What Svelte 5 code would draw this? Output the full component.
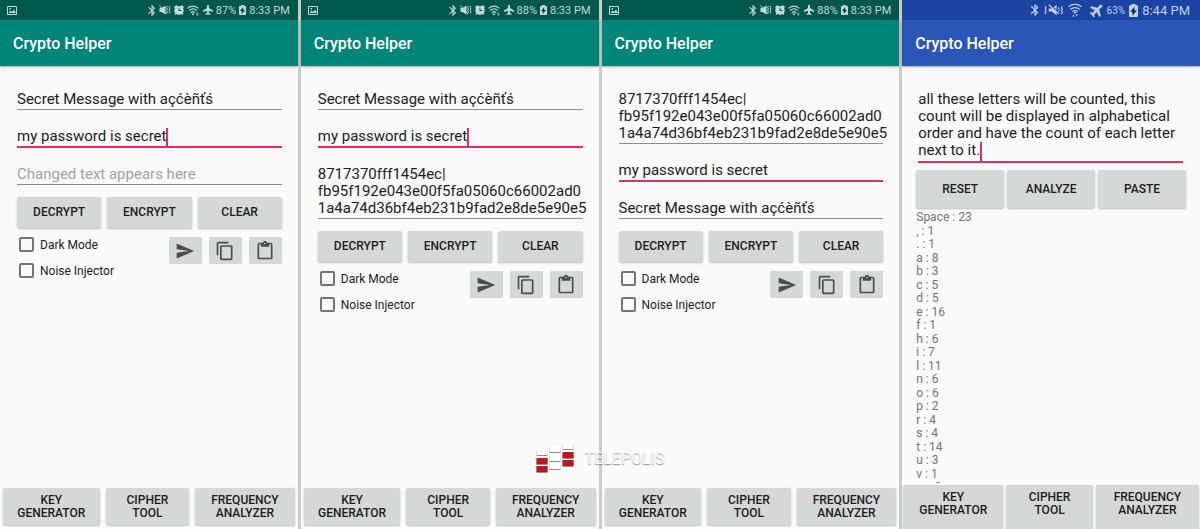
<script lang="ts">
  interface Field {
    label: string
    value: string
    focused?: boolean
    caret?: boolean
  }

  interface Phone {
    battery: string
    fields: Field[]
    darkMode: boolean
    noise: boolean
  }

  const message = 'Secret Message with açćèñťś'
  const cipher =
    '8717370fff1454ec|\nfb95f192e043e00f5fa05060c66002ad0\n1a4a74d36bf4eb231b9fad2e8de5e90e5'
  const password = 'my password is secret'
  const hint = 'Changed text appears here'

  let phones: Phone[] = $state([
    {
      battery: '87%',
      fields: [
        { label: 'Message', value: message },
        { label: 'Password', value: password, focused: true, caret: true },
        { label: 'Result', value: '' },
      ],
      darkMode: false,
      noise: false,
    },
    {
      battery: '88%',
      fields: [
        { label: 'Message', value: message },
        { label: 'Password', value: password, focused: true, caret: true },
        { label: 'Result', value: cipher },
      ],
      darkMode: false,
      noise: false,
    },
    {
      battery: '88%',
      fields: [
        { label: 'Message', value: cipher },
        { label: 'Password', value: password, focused: true },
        { label: 'Result', value: message },
      ],
      darkMode: false,
      noise: false,
    },
  ])

  let analyzed: Field = $state({
    label: 'Text to analyze',
    value:
      'all these letters will be counted, this count will be displayed in alphabetical order and have the count of each letter next to it.',
    focused: true,
    caret: true,
  })

  const counts: [string, number][] = [
    ['Space', 23],
    [',', 1],
    ['.', 1],
    ['a', 8],
    ['b', 3],
    ['c', 5],
    ['d', 5],
    ['e', 16],
    ['f', 1],
    ['h', 6],
    ['i', 7],
    ['l', 11],
    ['n', 6],
    ['o', 6],
    ['p', 2],
    ['r', 4],
    ['s', 4],
    ['t', 14],
    ['u', 3],
    ['v', 1],
    ['w', 2],
  ]
</script>

{#snippet bluetooth()}
  <svg class="icon bt" viewBox="5 2 14 20">
    <path d="M17.71 7.71 12 2h-1v7.59L6.41 5 5 6.41 10.59 12 5 17.59 6.41 19 11 14.41V22h1l5.71-5.71-4.3-4.29 4.3-4.29zM13 5.83l1.88 1.88L13 9.59V5.83zm1.88 10.46L13 18.17v-3.76l1.88 1.88z" />
  </svg>
{/snippet}

{#snippet batteryIcon()}
  <svg class="icon battery" viewBox="5 2 14 20">
    <path d="M17.500 4H15V2H9v2H6.500C5.600 4 5 4.600 5 5.300v15.400C5 21.400 5.600 22 6.500 22h11c.900 0 1.500-.600 1.500-1.300V5.300c0-.700-.600-1.300-1.500-1.300z" />
    <path class="bolt" d="M10.500 20v-6H7l6.500-8v6H17z" />
  </svg>
{/snippet}

{#snippet field(item: Field)}
  <div class="field" class:focused={item.focused}>
    <div class="mirror" aria-hidden="true">{item.value || hint}{#if item.caret}<span class="caret"></span>{/if}</div>
    <textarea rows="1" spellcheck="false" aria-label={item.label} placeholder={hint} bind:value={item.value}></textarea>
  </div>
{/snippet}

{#snippet nav()}
  <nav class="bottom">
    <button class="btn">KEY<br />GENERATOR</button>
    <button class="btn">CIPHER<br />TOOL</button>
    <button class="btn">FREQUENCY<br />ANALYZER</button>
  </nav>
{/snippet}

<div class="screens">
  {#each phones as phone}
    <section class="phone">
      <div class="status">
        <svg class="icon picture" viewBox="0 0 20 18">
          <path fill-rule="evenodd" d="M2 0h16a2 2 0 0 1 2 2v14a2 2 0 0 1-2 2H2a2 2 0 0 1-2-2V2a2 2 0 0 1 2-2zm0 2v14h16V2zm1 12 4-5 3 3 4-5 4 7zM5 4h3v3H5z" />
        </svg>
        {@render bluetooth()}
        <svg class="icon mute" viewBox="0 0 24 20">
          <path d="M1 6h4l8-5v18l-8-5H1z" />
          <path class="line" d="M1 1l14 17M17 2l-2 3 2 3-2 3 2 3-2 3M22 2l-2 3 2 3-2 3 2 3-2 3" />
        </svg>
        <svg class="icon alarm" viewBox="1 1 22 22">
          <path fill-rule="evenodd" d="M6 1 1 5.500l2 2.500a10 10 0 0 0 1 11l-2 2 2 2 2.500-2a10 10 0 0 0 11 0l2.500 2 2-2-2-2a10 10 0 0 0 1-11l2-2.500L18 1l-3 2.500a10 10 0 0 0-6 0zM11 7h2v5h4v2h-6z" />
        </svg>
        <svg class="icon wifi" viewBox="0 0 24 20">
          <path class="line" d="M1 6q10-8 20 0M4 10q7-6 14 0M7 14q4-4 8 0" />
          <path d="m11 19-3-3q3-2 6 0zM19 13l2 3h-4zM19 20l2-3h-4z" />
        </svg>
        <svg class="icon plane" viewBox="2 2 20 20">
          <path d="M22 16v-3l-8-5V3.500a2 2 0 0 0-4 0V8l-8 5v3l8-2.500V18l-3 2v2l5-1 5 1v-2l-3-2v-4.500z" />
        </svg>
        <span class="level">{phone.battery}</span>
        {@render batteryIcon()}
        <span class="time">8:33 PM</span>
      </div>
      <header><h1>Crypto Helper</h1></header>

      <main>
        {#each phone.fields as item}
          {@render field(item)}
        {/each}

        <div class="actions">
          <button class="btn">DECRYPT</button>
          <button class="btn">ENCRYPT</button>
          <button class="btn">CLEAR</button>
        </div>

        <div class="options">
          <div class="checks">
            <label><input type="checkbox" bind:checked={phone.darkMode} />Dark Mode</label>
            <label><input type="checkbox" bind:checked={phone.noise} />Noise Injector</label>
          </div>
          <div class="tools">
            <button class="tool" aria-label="Send">
              <svg viewBox="0 0 24 24"><path d="M2.010 21 23 12 2.010 3 2 10l15 2-15 2z" /></svg>
            </button>
            <button class="tool" aria-label="Copy">
              <svg viewBox="0 0 24 24"><path d="M16 1H4c-1.100 0-2 .900-2 2v14h2V3h12V1zm3 4H8c-1.100 0-2 .900-2 2v14c0 1.100.900 2 2 2h11c1.100 0 2-.900 2-2V7c0-1.100-.900-2-2-2zm0 16H8V7h11v14z" /></svg>
            </button>
            <button class="tool" aria-label="Paste">
              <svg viewBox="0 0 24 24"><path d="M19 2h-4.180C14.400.840 13.300 0 12 0S9.600.840 9.180 2H5c-1.100 0-2 .900-2 2v16c0 1.100.900 2 2 2h14c1.100 0 2-.900 2-2V4c0-1.100-.900-2-2-2zm-7 0c.550 0 1 .450 1 1s-.450 1-1 1-1-.450-1-1 .450-1 1-1zm7 18H5V4h2v3h10V4h2v16z" /></svg>
            </button>
          </div>
        </div>
      </main>

      {@render nav()}
    </section>
  {/each}

  <section class="phone analyzer">
    <div class="status">
      {@render bluetooth()}
      <svg class="icon mute" viewBox="0 0 38 22">
        <path d="M9 8h6l9-7v20l-9-7H9z" />
        <path class="slash" d="M11 1l19 17" />
        <path class="line" d="M9 1l20 18M2 4l2 3-2 3 2 3-2 3 2 3M35 4l-2 3 2 3-2 3 2 3-2 3M27 6q3 4 1 8" />
      </svg>
      <svg class="icon wifi" viewBox="0 0 26 26">
        <path class="line" d="M1 7q12-10 24 0M4 12q9-7 18 0M8 16q5-4 10 0" />
        <path d="m13 20-3-3q3-2 6 0zM10 21l2 4H8zM16 25l2-4h-4z" />
      </svg>
      <svg class="icon plane" viewBox="2 2 20 20">
        <path transform="rotate(45 12 12)" d="M22 16v-3l-8-5V2a2 2 0 0 0-4 0v6l-8 5v3l8-2.500V19l-3 2v2l5-1 5 1v-2l-3-2v-5.500z" />
      </svg>
      <span class="level">63%</span>
      {@render batteryIcon()}
      <span class="time">8:44 PM</span>
    </div>
    <header><h1>Crypto Helper</h1></header>

    <main>
      {@render field(analyzed)}

      <div class="actions">
        <button class="btn">RESET</button>
        <button class="btn">ANALYZE</button>
        <button class="btn">PASTE</button>
      </div>

      <ul class="counts">
        {#each counts as [letter, count]}
          <li>{letter} : {count}</li>
        {/each}
      </ul>
    </main>

    {@render nav()}
  </section>

  <div class="watermark">
    <svg viewBox="0 0 39 31">
      <path class="shade" d="M1 7h11v6H1zM14 4h11v6H14zM14 12h11v7H14zM14 21h11v6H14zM27 1h11v6H27zM1 16h11v6H1zM1 24h11v6H1zM27 10h11v6H27zM27 18h11v6H27z" />
      <path fill="#fff" d="M1 6h11v6H1zM14 3h11v6H14zM14 11h11v7H14zM14 20h11v6H14zM27 0h11v6H27z" />
      <path fill="#c01620" d="M1 15h11v6H1zM1 23h11v6H1zM27 9h11v6H27zM27 17h11v6H27z" />
    </svg>
    <span>TELEPOLIS</span>
  </div>
</div>

<style>
  :global(body) {
    margin: 0;
    background: #cbcbcb;
  }

  .screens {
    position: relative;
    display: grid;
    grid-template-columns: repeat(4, minmax(0, 1fr));
    gap: 3px;
    height: 100vh;
    overflow: hidden;
    font-family: Roboto, sans-serif;
    color: #1c1c1c;
  }

  .phone {
    display: flex;
    flex-direction: column;
    min-height: 0;
    background: #fafafa;
  }

  .status {
    display: flex;
    align-items: center;
    gap: 3px;
    height: 20px;
    padding: 0 8px 0 7px;
    box-sizing: border-box;
    background: #00574b;
    color: #c2dad6;
    font-size: 11px;
    white-space: nowrap;
  }

  .icon {
    flex: none;
    fill: currentColor;
  }

  .icon .line {
    fill: none;
    stroke: currentColor;
    stroke-width: 2;
  }

  .icon .bolt {
    fill: #00352e;
  }

  .picture {
    width: 10px;
    height: 9px;
  }

  .bt {
    width: 8px;
    height: 11px;
    margin-left: auto;
  }

  .mute {
    width: 12px;
    height: 10px;
  }

  .mute .slash {
    stroke: #1a43a2;
    stroke-width: 3;
  }

  .alarm,
  .plane {
    width: 10px;
    height: 10px;
  }

  .wifi {
    width: 13px;
    height: 11px;
  }

  .battery {
    width: 7px;
    height: 10px;
  }

  header {
    display: flex;
    align-items: center;
    height: 46px;
    padding: 0 13px;
    background: #008577;
    box-shadow: 0 1px 2px rgba(0, 0, 0, 0.35);
  }

  h1 {
    margin: 0;
    color: #fff;
    font-size: 16px;
    font-weight: 500;
  }

  main {
    display: flex;
    flex: 1;
    flex-direction: column;
    min-height: 0;
    padding: 7px 16px 0 17px;
  }

  .field {
    display: grid;
    padding: 18px 0 1px;
    border-bottom: 1px solid #8c8c8c;
    font-size: 15px;
    line-height: 17px;
  }

  .field.focused {
    border-bottom: 2px solid #e92a62;
  }

  .mirror,
  textarea {
    grid-area: 1 / 1;
    min-width: 0;
    margin-right: -8px;
    white-space: pre-wrap;
    overflow-wrap: break-word;
  }

  /* sizes the textarea and carries the caret */
  .mirror {
    color: transparent;
  }

  .caret {
    display: inline-block;
    width: 2px;
    height: 19px;
    margin: -2px -2px -2px 0;
    background: #e92a62;
    vertical-align: middle;
  }

  textarea {
    padding: 0;
    border: 0;
    outline: 0;
    resize: none;
    overflow: hidden;
    background: none;
    color: inherit;
    font: inherit;
  }

  textarea::placeholder {
    color: #a3a3a3;
  }

  .actions {
    display: grid;
    grid-template-columns: repeat(3, minmax(0, 1fr));
    gap: 6px;
    margin-top: 12px;
  }

  .btn {
    min-height: 31px;
    padding: 0;
    border: 0;
    border-radius: 2px;
    background: #d6d8d7;
    box-shadow: 0 1px 2px rgba(0, 0, 0, 0.25);
    color: #1c1c1c;
    font-family: inherit;
    font-size: 12px;
    font-weight: 500;
    line-height: 13px;
  }

  .options {
    display: flex;
    justify-content: space-between;
    align-items: flex-start;
    padding-top: 9px;
  }

  .checks {
    display: grid;
    gap: 11px;
    padding-left: 2px;
  }

  label {
    display: flex;
    align-items: center;
    gap: 6px;
    height: 15px;
    font-size: 12px;
  }

  input {
    appearance: none;
    width: 15px;
    height: 15px;
    margin: 0;
    box-sizing: border-box;
    border: 2px solid #757575;
    border-radius: 2px;
  }

  input:checked {
    background: #e92a62;
  }

  .tools {
    display: flex;
    gap: 7px;
  }

  .tool {
    display: grid;
    place-items: center;
    width: 33px;
    height: 27px;
    padding: 0;
    border: 0;
    border-radius: 1px;
    background: #d6d8d7;
  }

  .tool svg {
    width: 20px;
    height: 20px;
    fill: #4b4b4b;
  }

  .bottom {
    display: grid;
    grid-template-columns: 96fr 83fr 99fr;
    gap: 6px;
    padding: 0 3px 4px;
  }

  .bottom .btn {
    min-height: 37px;
  }

  .analyzer .status {
    gap: 4px;
    padding-right: 10px;
    background: #1a43a2;
    color: #c3cfe9;
    font-size: 13px;
  }

  .analyzer .level {
    font-size: 10px;
  }

  .analyzer .bolt {
    fill: #101d3c;
  }

  .analyzer .bt {
    width: 10px;
    height: 12px;
  }

  .analyzer .mute {
    width: 20px;
    height: 12px;
  }

  .analyzer .wifi {
    width: 14px;
    height: 14px;
  }

  .analyzer .plane {
    width: 13px;
    height: 13px;
    margin-left: 4px;
  }

  .analyzer .battery {
    width: 9px;
    height: 13px;
  }

  .analyzer header {
    background: #2a56b7;
  }

  .analyzer main {
    padding: 7px 14px 0;
  }

  .analyzer .field {
    margin: 0 3px 0 2px;
    padding-bottom: 2px;
  }

  .analyzer .actions {
    gap: 3px;
    margin-top: 7px;
  }

  .analyzer .actions .btn {
    min-height: 38px;
  }

  .counts {
    flex: 1;
    min-height: 0;
    margin: 3px 0 2px;
    padding: 0;
    overflow: hidden;
    list-style: none;
    color: #757575;
    font-size: 12px;
    line-height: 13px;
  }

  .counts li:nth-child(even) {
    padding-top: 1px;
  }

  .analyzer .bottom {
    gap: 3px;
    padding: 0 1px;
  }

  .analyzer .bottom .btn {
    min-height: 44px;
    padding-bottom: 6px;
  }

  .watermark {
    position: absolute;
    bottom: 55px;
    left: 50%;
    display: flex;
    align-items: center;
    gap: 10px;
    transform: translateX(-50%);
    color: #fcfcfc;
    font-size: 16px;
    font-weight: 400;
    text-shadow: 0 1px 1px rgba(0, 0, 0, 0.4);
    pointer-events: none;
  }

  .watermark svg {
    width: 39px;
    height: 31px;
  }

  .watermark .shade {
    fill: #8d8d8d;
  }
</style>
